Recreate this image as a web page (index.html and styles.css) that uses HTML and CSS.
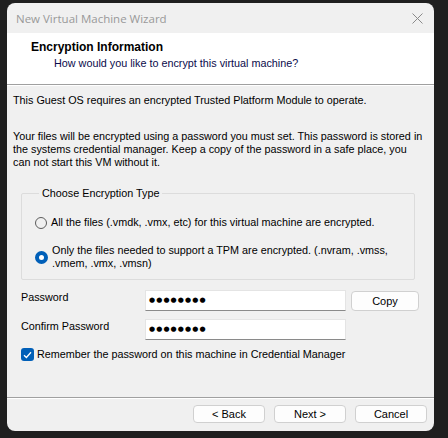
FILE: index.html
```html
<!DOCTYPE html>
<html lang="en">
<head>
    <meta charset="UTF-8">
    <title>New Virtual Machine Wizard</title>
    <link rel="stylesheet" href="styles.css">
</head>
<body>
    <div class="window">
        <div class="titlebar">
            <span class="title">New Virtual Machine Wizard</span>
            <svg class="close" width="11" height="11" viewBox="0 0 11 11">
                <path d="M0.5 0.5 L10.5 10.5 M10.5 0.5 L0.5 10.5" stroke="#8a8a8a" stroke-width="1" fill="none"/>
            </svg>
        </div>

        <div class="header">
            <div class="header-title">Encryption Information</div>
            <div class="header-sub">How would you like to encrypt this virtual machine?</div>
        </div>

        <div class="content">
            <p class="note">This Guest OS requires an encrypted Trusted Platform Module to operate.</p>
            <p class="info">Your files will be encrypted using a password you must set. This password is stored in the systems credential manager. Keep a copy of the password in a safe place, you<br>can not start this VM without it.</p>

            <fieldset class="group">
                <legend>Choose Encryption Type</legend>
                <label class="radio-row">
                    <span class="radio"></span>
                    <span>All the files (.vmdk, .vmx, etc) for this virtual machine are encrypted.</span>
                </label>
                <label class="radio-row">
                    <span class="radio checked"></span>
                    <span>Only the files needed to support a TPM are encrypted. (.nvram, .vmss,<br>.vmem, .vmx, .vmsn)</span>
                </label>
            </fieldset>

            <div class="fields">
                <span class="field-label">Password</span>
                <div class="pw-box"><span class="dots">●●●●●●●●</span></div>
                <button class="btn copy">Copy</button>

                <span class="field-label">Confirm Password</span>
                <div class="pw-box"><span class="dots">●●●●●●●●</span></div>
                <span></span>
            </div>

            <label class="check-row">
                <span class="checkbox">
                    <svg width="9" height="8" viewBox="0 0 9 8">
                        <path d="M1 4.2 L3.4 6.5 L8 1.2" stroke="#fff" stroke-width="1.3" fill="none"/>
                    </svg>
                </span>
                <span>Remember the password on this machine in Credential Manager</span>
            </label>
        </div>

        <div class="footer">
            <button class="btn">&lt; Back</button>
            <button class="btn">Next &gt;</button>
            <button class="btn">Cancel</button>
        </div>
    </div>
</body>
</html>
```

FILE: styles.css
```css
body {
    margin: 0;
    padding: 3px 0 0 7px;
    background: #1f1f1f;
    font-family: "Liberation Sans", Arial, sans-serif;
    font-size: 10.8px;
    line-height: 13px;
    color: #000;
}

.window {
    width: 427px;
    height: 428px;
    background: #f0f0f0;
    border-radius: 8px;
    overflow: hidden;
    display: flex;
    flex-direction: column;
}

.titlebar {
    height: 30px;
    display: flex;
    align-items: center;
    justify-content: space-between;
    padding: 0 11px 0 9px;
}

.title {
    font-family: "Open Sans", sans-serif;
    font-size: 11.5px;
    color: #999;
}

.header {
    height: 52px;
    background: #fff;
    border-bottom: 1px solid #a0a0a0;
    box-shadow: 0 1px 0 #fff;
    box-sizing: border-box;
    padding: 8px 0 0 24px;
}

.header-title {
    font-weight: bold;
    font-size: 12px;
}

.header-sub {
    margin-top: 3px;
    padding-left: 23px;
    color: #0a0a4a;
}

.content {
    flex: 1;
    padding: 9px 6px 0 6px;
}

.content p {
    margin: 0;
}

.note {
    margin-bottom: 23px !important;
}

.group {
    margin: 18px 13px 0 8px;
    padding: 16px 0 9px 13px;
    border: 1px solid #dcdcdc;
    border-radius: 2px;
}

.group legend {
    padding: 0 3px;
    margin-left: 4px;
}

.radio-row {
    display: flex;
    align-items: center;
    gap: 4px;
    margin-bottom: 15px;
}

.radio-row:last-child {
    margin-bottom: 0;
}

.radio {
    width: 10px;
    height: 10px;
    border: 1px solid #5c5c5c;
    border-radius: 50%;
    flex-shrink: 0;
}

.radio.checked {
    width: 5px;
    height: 5px;
    border: 4px solid #005fb8;
    background: #fff;
}

.fields {
    display: grid;
    grid-template-columns: 124px 201px 73px;
    row-gap: 8px;
    margin: 10px 0 0 8px;
}

.field-label {
    padding-top: 1px;
}

.pw-box {
    height: 21px;
    background: #fff;
    border: 1px solid #e4e4e4;
    border-bottom-color: #8a8a8a;
    box-sizing: border-box;
    display: flex;
    align-items: center;
    padding-left: 3px;
}

.dots {
    font-family: "DejaVu Sans", sans-serif;
    font-size: 7px;
    letter-spacing: 1.1px;
}

.btn {
    font-family: "Liberation Sans", Arial, sans-serif;
    font-size: 11px;
    height: 18px;
    width: 72px;
    padding: 0;
    background: #fdfdfd;
    border: 1px solid #d0d0d0;
    border-radius: 4px;
    color: #000;
}

.copy {
    width: 68px;
    height: 20px;
    margin: 1px 0 0 5px;
}

.check-row {
    display: flex;
    align-items: center;
    gap: 3px;
    margin: 8px 0 0 8px;
}

.checkbox {
    width: 13px;
    height: 13px;
    background: #005fb8;
    border-radius: 3px;
    display: flex;
    align-items: center;
    justify-content: center;
}

.footer {
    height: 34px;
    border-top: 1px solid #a0a0a0;
    box-shadow: inset 0 1px 0 #fff;
    box-sizing: border-box;
    display: flex;
    justify-content: flex-end;
    gap: 9px;
    padding: 7px 7px 0 0;
}
```
